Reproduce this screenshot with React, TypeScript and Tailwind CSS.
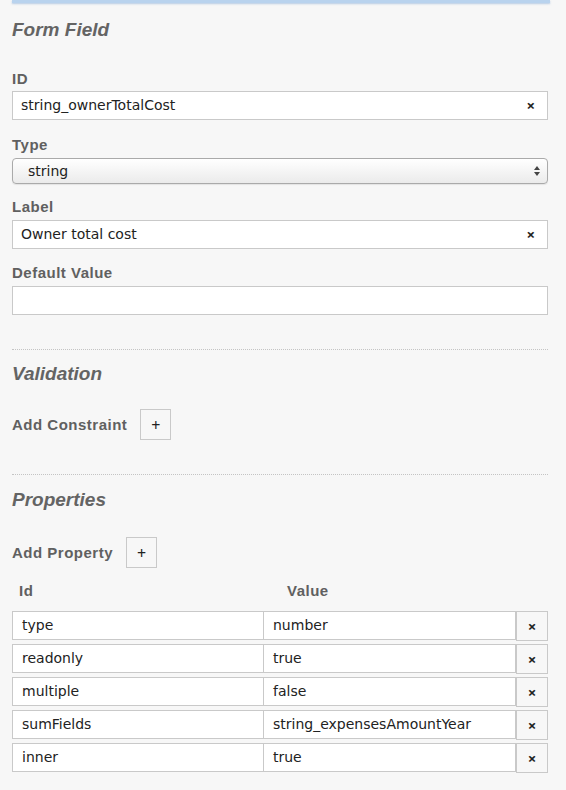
import * as React from "react";

const inputFont = "font-['DejaVu_Sans',sans-serif] text-[14px] text-[#222]";
const labelCls =
  "font-['Liberation_Sans',Arial,sans-serif] text-[15px] font-bold leading-[17px] tracking-[0.5px] text-[#606060]";
const headingCls =
  "font-['Liberation_Sans',Arial,sans-serif] text-[19px] font-bold italic leading-[22px] text-[#646464]";

const ClearInput = ({ value }: { value: string }) => (
  <div className="flex h-[29px] items-center justify-between border border-[#c9c9c9] bg-white pl-2 pr-[12px]">
    <span className={inputFont}>{value}</span>
    {value && <span className="text-[15px] font-bold leading-none text-[#222]">×</span>}
  </div>
);

const AddButton = () => (
  <button
    type="button"
    className="flex h-[31px] w-[31px] items-center justify-center border border-[#c9c9c9] bg-[#f7f7f7] text-[16px] leading-none text-[#222]"
  >
    +
  </button>
);

const properties = [
  { id: "type", value: "number" },
  { id: "readonly", value: "true" },
  { id: "multiple", value: "false" },
  { id: "sumFields", value: "string_expensesAmountYear" },
  { id: "inner", value: "true" },
];

export default function App() {
  return (
    <div className="min-h-[790px] bg-[#f7f7f7] pl-3 pr-[18px]">
      <div className="mr-[-2px] h-[3px] bg-[#b9d3ee] shadow-[0_1px_2px_rgba(120,160,210,0.5)]" />

      <h2 className={`${headingCls} mt-[16px]`}>Form Field</h2>

      <div className={`${labelCls} mt-[29px]`}>ID</div>
      <div className="mt-[4px]">
        <ClearInput value="string_ownerTotalCost" />
      </div>

      <div className={`${labelCls} mt-[16px]`}>Type</div>
      <div className="mt-[5px] flex h-[26px] items-center justify-between rounded-[4px] border border-[#aaa] bg-gradient-to-b from-white to-[#ebebeb] pl-[15px] pr-[6px] shadow-[0_1px_1px_rgba(0,0,0,0.08)]">
        <span className={inputFont}>string</span>
        <svg width="8" height="12" viewBox="0 0 8 12">
          <path d="M4 1 L7 5 L1 5 Z" fill="#444" />
          <path d="M4 11 L7 7 L1 7 Z" fill="#444" />
        </svg>
      </div>

      <div className={`${labelCls} mt-[14px]`}>Label</div>
      <div className="mt-[5px]">
        <ClearInput value="Owner total cost" />
      </div>

      <div className={`${labelCls} mt-[15px]`}>Default Value</div>
      <div className="mt-[5px]">
        <ClearInput value="" />
      </div>

      <div className="mt-[34px] border-t border-dotted border-[#c4c4c4]" />

      <h2 className={`${headingCls} mt-[13px]`}>Validation</h2>

      <div className="mt-[24px] flex items-center gap-[13px]">
        <span className={labelCls}>Add Constraint</span>
        <AddButton />
      </div>

      <div className="mt-[34px] border-t border-dotted border-[#c4c4c4]" />

      <h2 className={`${headingCls} mt-[14px]`}>Properties</h2>

      <div className="mt-[26px] flex items-center gap-[13px]">
        <span className={labelCls}>Add Property</span>
        <AddButton />
      </div>

      <div className="mt-[14px] flex">
        <span className={`${labelCls} w-[251px] pl-[7px]`}>Id</span>
        <span className={`${labelCls} pl-[24px]`}>Value</span>
      </div>

      <div className="mt-[12px] flex flex-col gap-[3px]">
        {properties.map((p) => (
          <div key={p.id} className="flex items-start">
            <div className="flex h-[29px] w-[252px] items-center border border-[#c9c9c9] bg-white pl-[9px]">
              <span className={inputFont}>{p.id}</span>
            </div>
            <div className="ml-[-1px] flex h-[29px] w-[253px] items-center border border-[#c9c9c9] bg-white pl-[9px]">
              <span className={inputFont}>{p.value}</span>
            </div>
            <button
              type="button"
              className="flex h-[30px] w-[32px] items-center justify-center border border-[#c9c9c9] bg-[#f7f7f7] text-[15px] font-bold leading-none text-[#222]"
            >
              ×
            </button>
          </div>
        ))}
      </div>
    </div>
  );
}
